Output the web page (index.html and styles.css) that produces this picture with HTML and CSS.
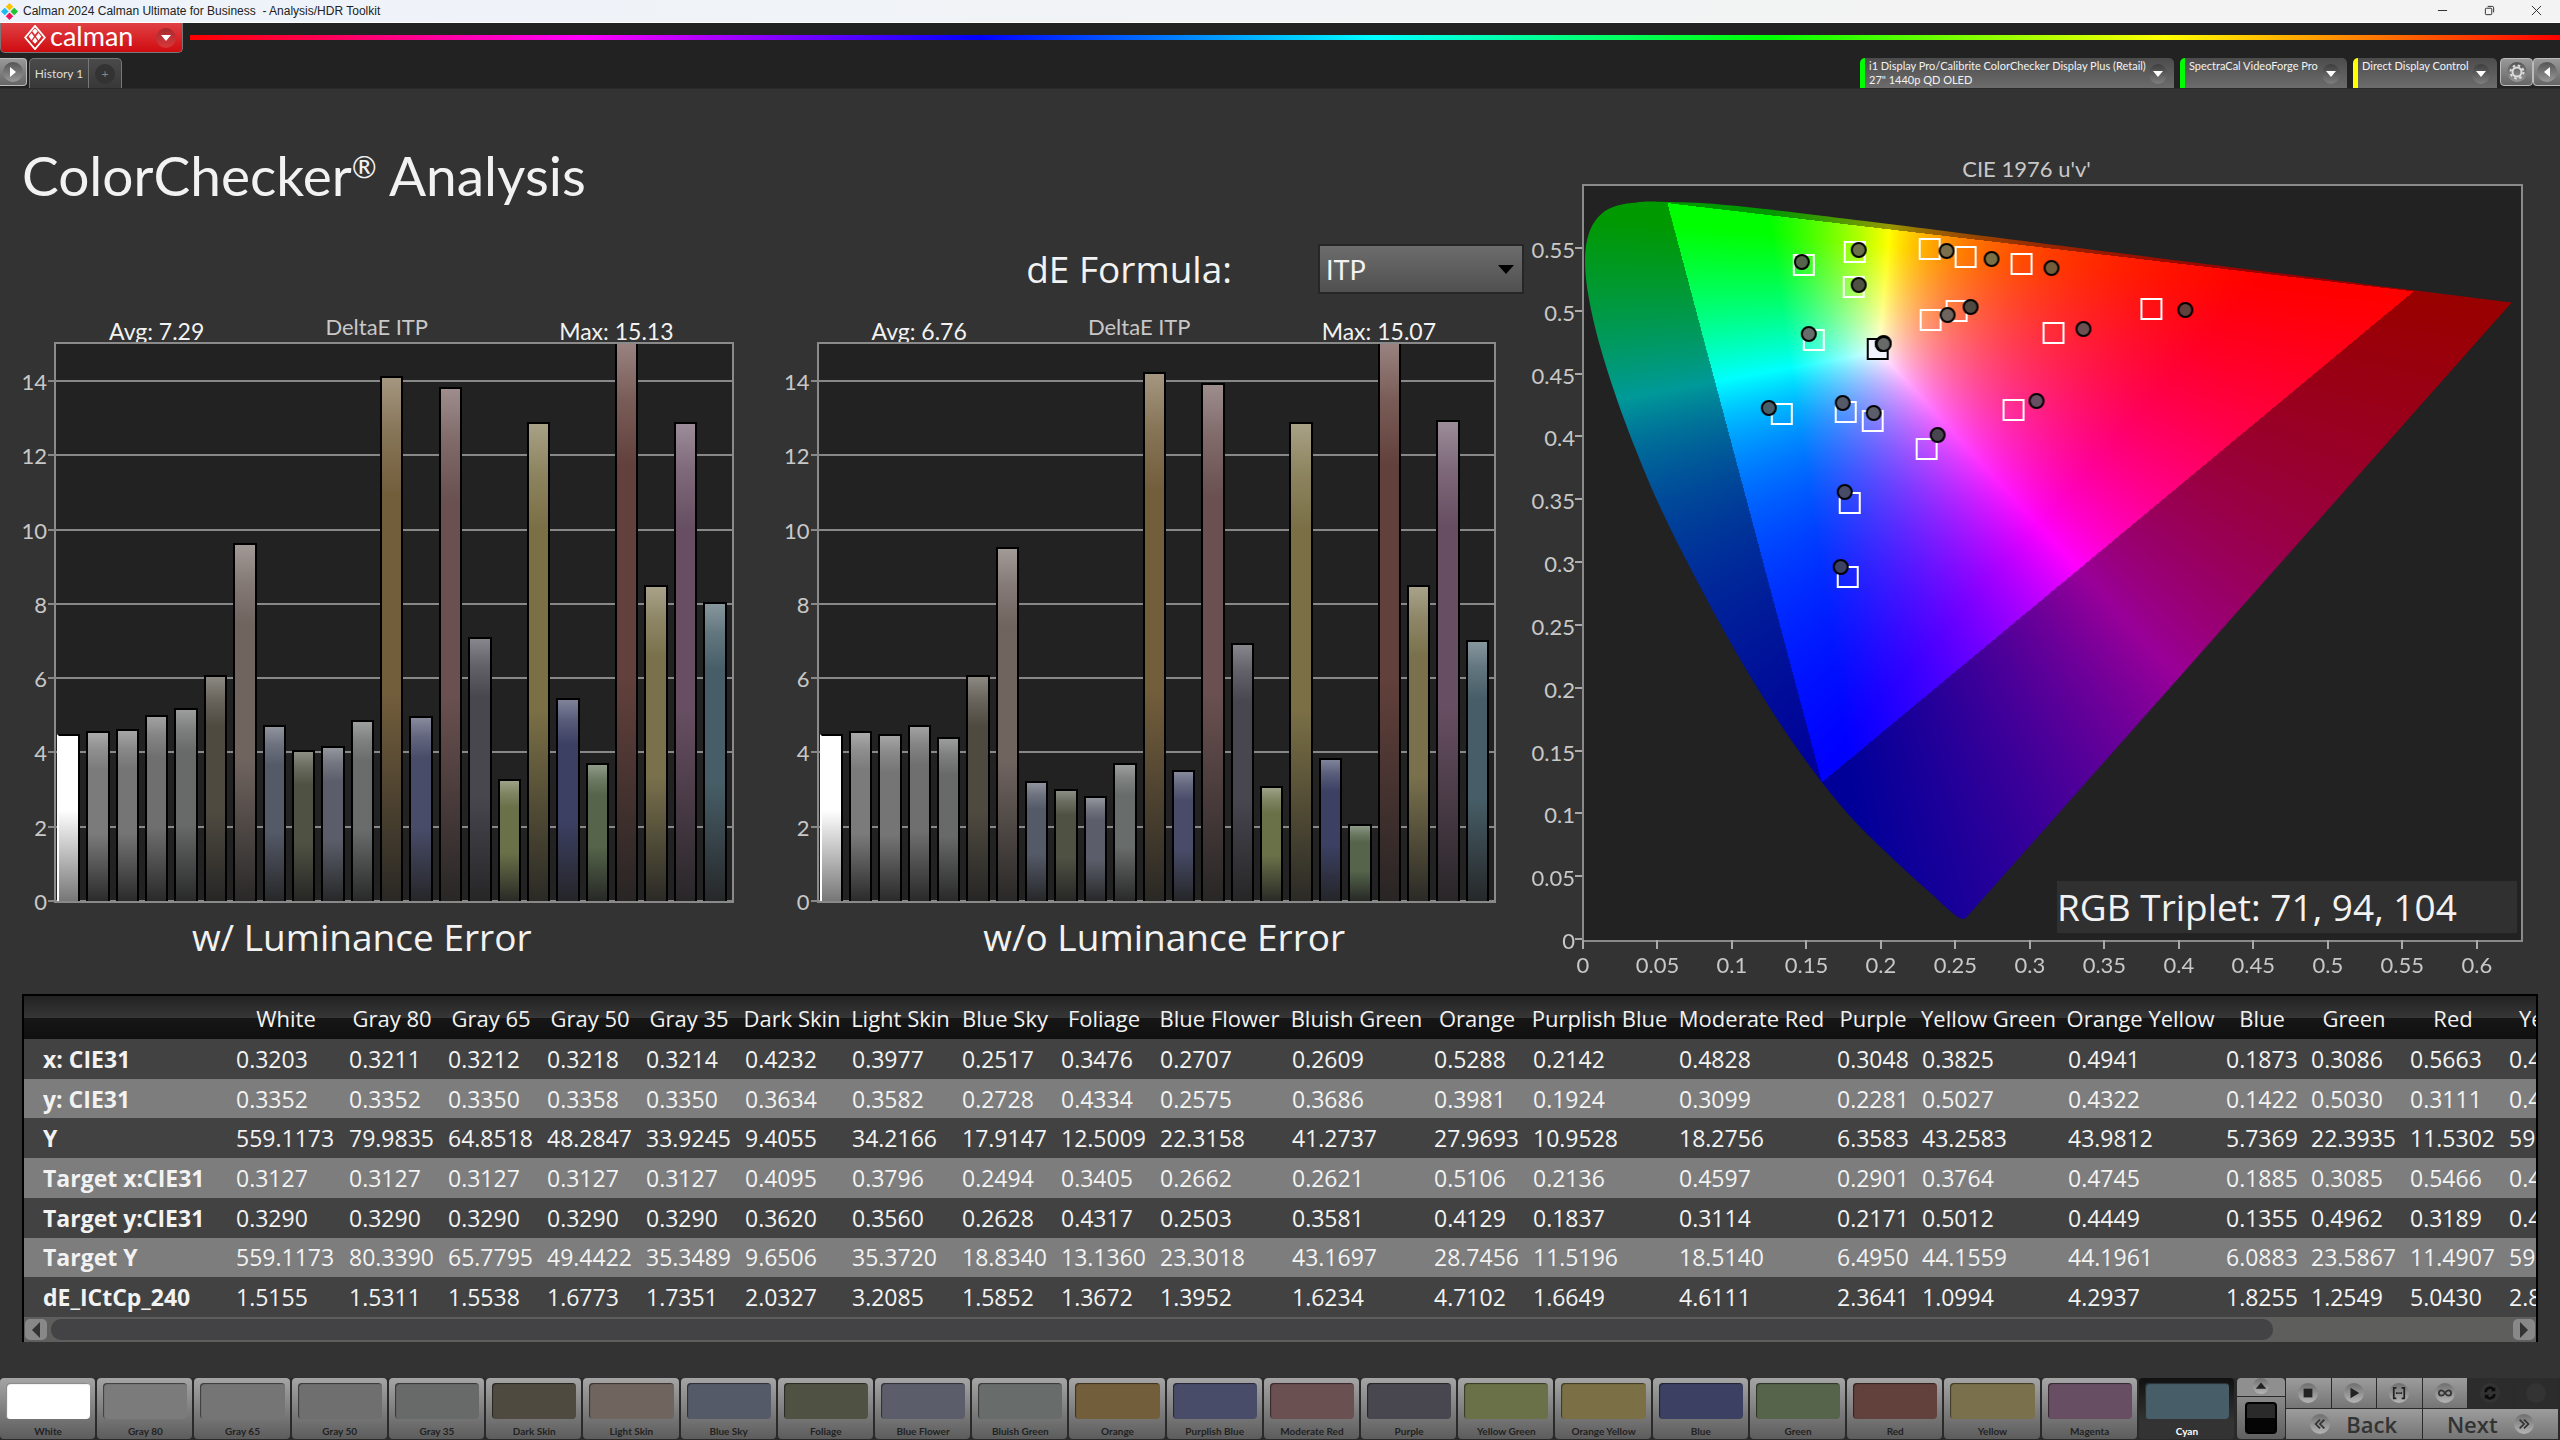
FILE: index.html
```html
<!DOCTYPE html>
<html lang="en">
<head>
<meta charset="UTF-8">
<meta name="viewport" content="width=device-width, initial-scale=1.0">
<title>Calman 2024 Calman Ultimate for Business - Analysis/HDR Toolkit</title>
<link rel="stylesheet" href="styles.css">
</head>
<body>
<div class="titlebar">
    <svg class="app-icon" viewBox="0 0 18 18">
        <path d="M9 0l4 4-4 4-4-4z" fill="#fdc300"/>
        <path d="M4 5l4 4-4 4-4-4z" fill="#22b8f0"/>
        <path d="M14 5l4 4-4 4-4-4z" fill="#22c32e"/>
        <path d="M9 10l4 4-4 4-4-4z" fill="#f0145a"/>
    </svg>
    <span>Calman 2024 Calman Ultimate for Business &nbsp;- Analysis/HDR Toolkit</span>
    <div class="window-buttons">
        <button aria-label="Minimize"><svg viewBox="0 0 12 12"><path d="M1 6h10"/></svg></button>
        <button aria-label="Restore"><svg viewBox="0 0 12 12"><rect x="1.5" y="3.5" width="7" height="7" rx="1"/><path d="M4 1.5h5q1.5 0 1.5 1.5v5"/></svg></button>
        <button aria-label="Close"><svg viewBox="0 0 12 12"><path d="M1 1l10 10M11 1L1 11"/></svg></button>
    </div>
</div>

<header>
    <div class="brandbar">
        <button class="logo">
            <svg class="logo-mark" viewBox="0 0 24 28">
                <path d="M12 1L23 14 12 27 1 14z" fill="none" stroke="#fff" stroke-width="2"/>
                <g fill="#fff">
                    <path d="M12 4l3 3-3 4-3-4z"/><path d="M8 9l3 4-3 4-3-4z"/><path d="M16 9l3 4-3 4-3-4z"/>
                    <path d="M12 14l3 4-3 3-3-3z"/>
                </g>
            </svg>
            <span class="logo-text">calman</span>
            <span class="round"><i class="arrow down"></i></span>
        </button>
        <div class="rainbow"></div>
    </div>
    <div class="tabbar">
        <button class="side-btn left" aria-label="Expand"><span class="round"><i class="arrow right"></i></span></button>
        <div class="tabs">
            <button class="tab">History 1</button>
            <button class="tab add"><span class="round dark">+</span></button>
        </div>
        <div class="devices">
            <button class="device meter">
                <span>i1 Display Pro/Calibrite ColorChecker Display Plus (Retail)<br>27" 1440p QD OLED</span>
                <span class="round"><i class="arrow down"></i></span>
            </button>
            <button class="device source">
                <span>SpectraCal VideoForge Pro</span>
                <span class="round"><i class="arrow down"></i></span>
            </button>
            <button class="device display">
                <span>Direct Display Control</span>
                <span class="round"><i class="arrow down"></i></span>
            </button>
            <button class="side-btn gear" aria-label="Settings"><span class="round">
                <svg viewBox="0 0 16 16"><circle cx="8" cy="8" r="4.5" fill="none" stroke="#ddd" stroke-width="2"/><circle cx="8" cy="8" r="6.5" fill="none" stroke="#ddd" stroke-width="2" stroke-dasharray="2.5 2.6"/></svg>
            </span></button>
            <button class="side-btn right" aria-label="Collapse"><span class="round"><i class="arrow left"></i></span></button>
        </div>
    </div>
</header>

<main>
    <div class="dash">
        <section class="left">
            <h1>ColorChecker<span class="reg">®</span> Analysis</h1>
            <div class="formula">
                <label for="formula">dE Formula:</label>
                <div class="select-wrap">
                    <select id="formula">
                        <option>ITP</option>
                        <option>2000</option>
                        <option>1994</option>
                    </select>
                </div>
            </div>
            <div class="charts">
                <div class="chart">
                    <div class="chart-head">
                        <span>Avg: 7.29</span><span class="chart-title">DeltaE ITP</span><span>Max: 15.13</span>
                    </div>
                    <div class="plot" id="chartLum"></div>
                    <div class="caption">w/ Luminance Error</div>
                </div>
                <div class="chart second">
                    <div class="chart-head">
                        <span>Avg: 6.76</span><span class="chart-title">DeltaE ITP</span><span>Max: 15.07</span>
                    </div>
                    <div class="plot" id="chartNoLum"></div>
                    <div class="caption">w/o Luminance Error</div>
                </div>
            </div>
        </section>
        <section class="cie">
            <div class="cie-title">CIE 1976 u'v'</div>
            <div class="cie-plot" id="ciePlot">
                <canvas id="cieCanvas" width="938" height="754"></canvas>
                <div class="triplet">RGB Triplet: 71, 94, 104</div>
            </div>
        </section>
    </div>

    <div class="grid-box">
        <div class="grid-view">
            <table id="dataTable"></table>
        </div>
        <div class="scrollbar">
            <button aria-label="Scroll left"><i class="arrow left"></i></button>
            <div class="track"><div class="thumb"></div></div>
            <button aria-label="Scroll right"><i class="arrow right"></i></button>
        </div>
    </div>
</main>

<footer>
    <div class="swatches" id="swatches"></div>
    <div class="level">
        <button class="level-up" aria-label="Up"><span class="knob"><svg viewBox="0 0 16 16"><path d="M8 4l6 7H2z" fill="#222"/></svg></span></button>
        <div class="level-box"><div class="level-color"></div></div>
    </div>
    <div class="controls">
        <div class="transport">
            <button aria-label="Stop"><span class="knob"><svg viewBox="0 0 16 16"><path d="M3 3h10v10H3z" fill="#222"/></svg></span></button>
            <button aria-label="Play"><span class="knob"><svg viewBox="0 0 16 16"><path d="M4 2l10 6-10 6z" fill="#222"/></svg></span></button>
            <button aria-label="Read series"><span class="knob"><svg viewBox="0 0 16 16"><path d="M5 2H2v12h3M11 2h3v12h-3M4.5 8h2M7.2 8h1.6M9.500 8h2" fill="none" stroke="#222" stroke-width="2"/></svg></span></button>
            <button aria-label="Read continuous"><span class="knob"><svg viewBox="0 0 16 16"><path d="M8 8C6 5 5 5 4 5a3 3 0 0 0 0 6c1 0 2 0 4-3s3-3 4-3a3 3 0 0 1 0 6c-1 0-2 0-4-3" fill="none" stroke="#333" stroke-width="2"/></svg></span></button>
            <button class="off" aria-label="Refresh"><span class="knob"><svg viewBox="0 0 16 16"><path d="M3 7a5 5 0 0 1 9-3M13 9a5 5 0 0 1-9 3" fill="none" stroke="#0c0c0c" stroke-width="3"/><path d="M14 1v5H9zM2 15v-5h5z" fill="#0c0c0c"/></svg></span></button>
            <button class="off" aria-label="Record"><span class="knob"></span></button>
        </div>
        <div class="nav">
            <button><span class="knob"><svg viewBox="0 0 16 16"><path d="M8 3L3 8l5 5M13 3L8 8l5 5" fill="none" stroke="#333" stroke-width="2"/></svg></span>Back</button>
            <button>Next<span class="knob"><svg viewBox="0 0 16 16"><path d="M3 3l5 5-5 5M8 3l5 5-5 5" fill="none" stroke="#333" stroke-width="2"/></svg></span></button>
        </div>
    </div>
</footer>

<script src="script.js"></script>
</body>
</html>
```

FILE: styles.css
```css
* {
    box-sizing: border-box;
}
body {
    margin: 0;
    min-height: 100vh;
    display: flex;
    flex-direction: column;
    font-family: Lato, 'Liberation Sans', sans-serif;
    background-color: #333;
    color: #f2f2f2;
    overflow-x: hidden;
}
button {
    font-family: inherit;
    color: inherit;
    border: 0;
    padding: 0;
    margin: 0;
    background: none;
    cursor: pointer;
}

/* window title */
.titlebar {
    display: flex;
    align-items: center;
    height: 23px;
    padding-left: 1px;
    background: linear-gradient(to right, #eef3fb, #f3f3f3 75%);
    border-bottom: 1px solid #fff;
    color: #222;
    font-family: 'Liberation Sans', sans-serif;
    font-size: 12px;
}
.app-icon {
    width: 17px;
    height: 17px;
    margin-right: 5px;
}
.window-buttons {
    display: flex;
    margin-left: auto;
}
.window-buttons button {
    width: 47px;
    height: 22px;
}
.window-buttons svg {
    width: 11px;
    height: 11px;
    fill: none;
    stroke: #222;
}

/* header */
header {
    background-color: #222;
    border-bottom: 1px solid #2a2a2a;
}
.brandbar {
    display: flex;
    gap: 7px;
    height: 35px;
}
.logo {
    display: flex;
    align-items: center;
    width: 183px;
    height: 30px;
    padding-left: 22px;
    background: linear-gradient(#df4145, #d8262a 50%, #cf0c10);
    border: 1px solid #777;
    border-top: 0;
    border-radius: 0 0 5px 5px;
    color: #fff;
}
.logo-mark {
    width: 24px;
    height: 25px;
}
.logo-text {
    margin: -5px auto 0 3px;
    font-size: 27px;
    line-height: 27px;
}
.round {
    display: flex;
    align-items: center;
    justify-content: center;
    flex: none;
    width: 20px;
    height: 20px;
    border-radius: 50%;
    background: linear-gradient(rgba(0, 0, 0, 0.25), rgba(255, 255, 255, 0.15));
}
.logo .round {
    margin-right: 6px;
}
.arrow {
    border: 5px solid transparent;
}
.arrow.down {
    border-top: 6px solid #fff;
    border-bottom: 0;
}
.arrow.right {
    border-left: 6px solid #fff;
    border-right: 0;
}
.arrow.left {
    border-right: 6px solid #fff;
    border-left: 0;
}
.rainbow {
    flex: 1;
    height: 5px;
    margin-top: 12px;
    background: linear-gradient(to right, #f00, #f0f, #00f, #0ff, #0f0, #ff0, #f00);
}
.tabbar {
    display: flex;
    height: 30px;
}
.side-btn {
    display: flex;
    align-items: center;
    justify-content: center;
    width: 33px;
    height: 28px;
    border: 1px solid #bbb;
    border-radius: 4px;
    background: linear-gradient(#999, #666);
}
.side-btn .round {
    background: linear-gradient(#555, #999);
}
.side-btn svg {
    width: 16px;
    height: 16px;
}
.side-btn.left {
    width: 27px;
    border-left: 0;
    border-radius: 0 4px 4px 0;
}
.side-btn.right {
    width: 27px;
    border-right: 0;
    border-radius: 4px 0 0 4px;
}
.tabs {
    display: flex;
    margin-left: 2px;
    border: 1px solid #777;
    border-bottom: 0;
    border-radius: 5px 5px 0 0;
    background: linear-gradient(#4a4a4a, #383838);
}
.tab {
    width: 58px;
    font-size: 12px;
    color: #ddd;
}
.tab.add {
    display: flex;
    align-items: center;
    justify-content: center;
    width: 33px;
    border-left: 1px solid #777;
    color: #888;
}
.round.dark {
    background: #333;
}
.devices {
    display: flex;
    gap: 6px;
    margin-left: auto;
}
.device {
    display: flex;
    justify-content: space-between;
    align-items: flex-start;
    padding: 1px 7px 0 4px;
    border-left: 5px solid #0f0;
    border-radius: 5px 5px 0 0;
    background: linear-gradient(#4c4c4c, #6c6c6c);
    font-size: 11px;
    line-height: 14px;
    text-align: left;
    white-space: nowrap;
}
.device .round {
    width: 18px;
    margin-top: 5px;
}
.meter {
    width: 314px;
}
.source {
    width: 167px;
}
.display {
    width: 144px;
    border-color: #ff0;
}
.gear {
    margin-left: -3px;
    margin-right: -6px;
}

/* dashboard */
main {
    padding: 54px 22px 0 16px;
}
.dash {
    display: grid;
    grid-template-columns: minmax(0, 1508fr) minmax(0, 997fr);
    gap: 2px;
    padding-right: 15px;
}
h1 {
    margin: 0;
    padding-left: 6px;
    font-size: 55px;
    line-height: 64px;
    font-weight: normal;
}
.reg {
    font-size: 30px;
    line-height: 30px;
    vertical-align: 18px;
}
.formula {
    display: flex;
    align-items: center;
    justify-content: flex-end;
    gap: 86px;
    margin-top: 37px;
    font-family: 'Open Sans', sans-serif;
    font-size: 37px;
    line-height: 50px;
}
.select-wrap {
    position: relative;
    width: 206px;
    height: 50px;
}
.select-wrap::after {
    content: "";
    position: absolute;
    right: 10px;
    top: 21px;
    border: 8px solid transparent;
    border-top: 9px solid #000;
    border-bottom: 0;
    pointer-events: none;
}
select {
    display: block;
    appearance: none;
    width: 100%;
    height: 50px;
    padding: 0 6px;
    border: 2px solid #262626;
    background: linear-gradient(#6c6c6c, #505050);
    color: #f2f2f2;
    font-family: Lato, sans-serif;
    font-size: 27px;
}
.charts {
    display: grid;
    grid-template-columns: 1fr 1fr;
    gap: 45px;
    padding-right: 28px;
}
.chart {
    padding-left: 38px;
}
.chart-head {
    display: flex;
    justify-content: space-between;
    align-items: flex-end;
    height: 48px;
    padding: 0 60px 0 55px;
    font-size: 23px;
    line-height: 22px;
}
.chart-title {
    padding: 0 10px 4px 0;
    font-size: 22px;
    color: #c8c8c8;
}
.plot {
    position: relative;
    display: grid;
    grid-template-columns: repeat(23, 1fr);
    height: 561px;
    border: 2px solid #8a8a8a;
    background-color: #222;
}
.gridline {
    position: absolute;
    left: -8px;
    right: 0;
    height: 2px;
    margin-bottom: -1px;
    background-color: #888;
}
.y-label {
    position: absolute;
    right: 100%;
    margin: 0 9px -14px 0;
    font-size: 22px;
    line-height: 26px;
    color: #c8c8c8;
}
.bar {
    position: relative;
    align-self: end;
    margin: 0 5px 0 1px;
    border: 2px solid #000;
    border-bottom: 0;
    background-image: linear-gradient(rgba(255, 255, 255, 0.35), rgba(255, 255, 255, 0.15) 10%, transparent 22%, transparent 60%, rgba(34, 34, 34, 0.9));
}
.bar.white {
    border-left-color: #fff;
    background-image: linear-gradient(transparent 45%, #777);
}
.caption {
    margin-top: 12px;
    font-family: 'Open Sans', sans-serif;
    font-size: 37px;
    line-height: 44px;
    text-align: center;
}
.chart .caption {
    margin-right: 64px;
}
.chart.second .caption {
    margin-right: 0;
    margin-left: 16px;
}

/* chromaticity */
.cie {
    padding-left: 56px;
}
.cie-title {
    padding: 12px 52px 1px 0;
    font-size: 22px;
    line-height: 28px;
    text-align: center;
    color: #c8c8c8;
}
.cie-plot {
    position: relative;
    height: 758px;
    border: 2px solid #8a8a8a;
    background-color: #222;
}
.cie-plot canvas {
    display: block;
    width: 100%;
    height: 100%;
}
.y-tick {
    position: absolute;
    left: -9px;
    width: 7px;
    height: 2px;
    background-color: #aaa;
}
.x-tick {
    position: absolute;
    top: 100%;
    width: 2px;
    height: 9px;
    margin-left: -2px;
    background-color: #aaa;
}
.x-label {
    position: absolute;
    top: 100%;
    width: 80px;
    margin: 12px 0 0 -41px;
    font-size: 22px;
    line-height: 26px;
    text-align: center;
    color: #c8c8c8;
}
.triplet {
    position: absolute;
    right: 4px;
    bottom: 7px;
    width: 460px;
    background-color: #303030;
    font-family: 'Open Sans', sans-serif;
    font-size: 37px;
    line-height: 52px;
    white-space: nowrap;
}

/* readings table */
.grid-box {
    margin: 35px 0 0 6px;
    border: 2px solid #000;
    border-bottom: 0;
}
.grid-view {
    overflow: hidden;
}
table {
    table-layout: fixed;
    border-collapse: collapse;
    height: 321px;
    font-family: 'Open Sans', sans-serif;
    font-size: 23px;
    line-height: 30px;
    white-space: nowrap;
}
th, td {
    padding: 0 0 0 5px;
    text-align: left;
}
thead tr {
    height: 43px;
    background: linear-gradient(#222, #363636 50%, #161616 50%, #101010);
}
thead th {
    padding: 0 3px 0 0;
    font-size: 22px;
    font-weight: normal;
    text-align: center;
}
tbody th {
    padding-left: 19px;
    font-size: 23px;
}
tbody tr {
    background-color: #424242;
}
tbody tr:nth-child(even) {
    background-color: #7d7d7d;
}
.scrollbar {
    display: flex;
    gap: 4px;
    height: 25px;
    padding: 2px 1px;
    background-color: #5e5e5c;
}
.scrollbar button {
    display: flex;
    align-items: center;
    justify-content: center;
    width: 22px;
    border-radius: 5px;
    background-color: #888;
}
.scrollbar .arrow {
    border-width: 8px;
}
.scrollbar .arrow.left {
    border-right-color: #333;
    border-left: 0;
}
.scrollbar .arrow.right {
    border-left-color: #333;
    border-right: 0;
}
.track {
    flex: 1;
}
.thumb {
    width: 90.4%;
    height: 100%;
    border-radius: 10px;
    background-color: #434345;
}

/* bottom bar */
footer {
    display: flex;
    gap: 1px;
    height: 62px;
    margin-top: auto;
    padding: 0 2px 1px 0;
    background-color: #2a2a2a;
}
.swatches {
    flex: 1;
    display: grid;
    grid-template-columns: repeat(23, minmax(0, 1fr));
}
.swatch {
    display: flex;
    flex-direction: column;
    justify-content: space-between;
    margin-right: 2px;
    padding: 5px 5px 2px 6px;
    border-radius: 4px;
    background: linear-gradient(#a5a5a5, #5c5c5c);
    color: #222;
    font-size: 10px;
    line-height: 12px;
    font-weight: bold;
    white-space: nowrap;
}
.swatch i {
    height: 36px;
    border-radius: 4px;
    box-shadow: inset 1px 1px 1px rgba(0, 0, 0, 0.5);
}
.swatch.active {
    background: linear-gradient(#111, #333 70%);
    color: #fff;
}
.level {
    width: 48px;
    display: flex;
    flex-direction: column;
    gap: 1px;
}
.level-up {
    display: flex;
    justify-content: center;
    height: 18px;
    border-radius: 4px 4px 0 0;
    background: #8f8f8f;
}
.level-box {
    flex: 1;
    display: flex;
    align-items: center;
    justify-content: center;
    border-radius: 0 0 4px 4px;
    background: linear-gradient(#888, #606060);
}
.level-color {
    width: 32px;
    height: 32px;
    border: 2px solid #000;
    border-radius: 4px;
    background: linear-gradient(#2a2a2a 50%, #050505 50%);
}
.controls {
    width: 272px;
    display: grid;
    grid-template-rows: 30px 30px;
    gap: 1px;
}
.transport, .nav {
    display: flex;
    gap: 1px;
}
.transport button, .nav button {
    flex: 1;
    display: flex;
    align-items: center;
    justify-content: center;
    background: linear-gradient(#9c9c9c, #757575);
}
.nav button {
    gap: 16px;
    color: #333;
    font-family: 'Open Sans', sans-serif;
    font-size: 22px;
    line-height: 28px;
    font-weight: 600;
}
.transport .off {
    background: #2c2c2c;
}
.knob {
    display: flex;
    align-items: center;
    justify-content: center;
    width: 20px;
    height: 20px;
    border-radius: 50%;
    background: linear-gradient(#6e6e6e, #b5b5b5);
}
.level-up .knob {
    width: 16px;
    height: 16px;
}
.off .knob {
    background: #333;
}
.knob svg {
    width: 14px;
    height: 14px;
}
```

FILE: script.js
```javascript
// name, color, dE with luminance, dE without luminance
const patches = [
    ['White', '#ffffff', 4.51, 4.51],
    ['Gray 80', '#7b7b7b', 4.57, 4.57],
    ['Gray 65', '#757575', 4.64, 4.51],
    ['Gray 50', '#6f6f6f', 5.02, 4.75],
    ['Gray 35', '#676a69', 5.21, 4.41],
    ['Dark Skin', '#4f4a40', 6.1, 6.1],
    ['Light Skin', '#70645f', 9.64, 9.53],
    ['Blue Sky', '#555a69', 4.75, 3.23],
    ['Foliage', '#4f5243', 4.07, 3.01],
    ['Blue Flower', '#5b5e6a', 4.18, 2.83],
    ['Bluish Green', '#686c6b', 4.87, 3.73],
    ['Orange', '#735e3c', 14.14, 14.25],
    ['Purplish Blue', '#484c68', 4.97, 3.52],
    ['Moderate Red', '#6a5050', 13.85, 13.96],
    ['Purple', '#48464f', 7.1, 6.94],
    ['Yellow Green', '#6a7048', 3.29, 3.11],
    ['Orange Yellow', '#7a6f45', 12.9, 12.9],
    ['Blue', '#3c4063', 5.48, 3.85],
    ['Green', '#55644a', 3.73, 2.08],
    ['Red', '#62403b', 15.13, 15.07],
    ['Yellow', '#7a714c', 8.5, 8.5],
    ['Magenta', '#674e62', 12.9, 12.96],
    ['Cyan', '#475e68', 8.05, 7.04]
];

const rows = {
    'x: CIE31': '0.3203 0.3211 0.3212 0.3218 0.3214 0.4232 0.3977 0.2517 0.3476 0.2707 0.2609 0.5288 0.2142 0.4828 0.3048 0.3825 0.4941 0.1873 0.3086 0.5663 0.4658',
    'y: CIE31': '0.3352 0.3352 0.3350 0.3358 0.3350 0.3634 0.3582 0.2728 0.4334 0.2575 0.3686 0.3981 0.1924 0.3099 0.2281 0.5027 0.4322 0.1422 0.5030 0.3111 0.4632',
    'Y': '559.1173 79.9835 64.8518 48.2847 33.9245 9.4055 34.2166 17.9147 12.5009 22.3158 41.2737 27.9693 10.9528 18.2756 6.3583 43.2583 43.9812 5.7369 22.3935 11.5302 59.1024',
    'Target x:CIE31': '0.3127 0.3127 0.3127 0.3127 0.3127 0.4095 0.3796 0.2494 0.3405 0.2662 0.2621 0.5106 0.2136 0.4597 0.2901 0.3764 0.4745 0.1885 0.3085 0.5466 0.4532',
    'Target y:CIE31': '0.3290 0.3290 0.3290 0.3290 0.3290 0.3620 0.3560 0.2628 0.4317 0.2503 0.3581 0.4129 0.1837 0.3114 0.2171 0.5012 0.4449 0.1355 0.4962 0.3189 0.4739',
    'Target Y': '559.1173 80.3390 65.7795 49.4422 35.3489 9.6506 35.3720 18.8340 13.1360 23.3018 43.1697 28.7456 11.5196 18.5140 6.4950 44.1559 44.1961 6.0883 23.5867 11.4907 59.8342',
    'dE_ICtCp_240': '1.5155 1.5311 1.5538 1.6773 1.7351 2.0327 3.2085 1.5852 1.3672 1.3952 1.6234 4.7102 1.6649 4.6111 2.3641 1.0994 4.2937 1.8255 1.2549 5.0430 2.8611'
};
const columnWidths = [207, 113, 99, 99, 99, 99, 107, 110, 99, 99, 132, 142, 99, 146, 158, 85, 146, 158, 85, 99, 99, 99];

function add(parent, tag, className, text) {
    const el = document.createElement(tag);
    if (className) el.className = className;
    if (text !== undefined) el.textContent = text;
    parent.appendChild(el);
    return el;
}

function drawBars(id, valueIndex) {
    const plot = document.getElementById(id);
    const max = 15;
    for (let v = 0; v <= 14; v += 2) {
        add(plot, 'div', 'gridline').style.bottom = v / max * 100 + '%';
        add(plot, 'span', 'y-label', v).style.bottom = v / max * 100 + '%';
    }
    patches.forEach(p => {
        const bar = add(plot, 'div', p[0] === 'White' ? 'bar white' : 'bar');
        bar.style.height = Math.min(p[valueIndex] / max * 100, 100) + '%';
        bar.style.backgroundColor = p[1];
        if (p[valueIndex] > max) bar.style.borderTop = 0;
    });
}

function drawTable() {
    const table = document.getElementById('dataTable');
    table.style.width = columnWidths.reduce((a, b) => a + b) + 'px';
    const group = add(table, 'colgroup');
    columnWidths.forEach(w => add(group, 'col').style.width = w + 'px');
    const head = add(add(table, 'thead'), 'tr');
    add(head, 'td');
    patches.slice(0, 21).forEach(p => add(head, 'th', '', p[0]).scope = 'col');
    const body = add(table, 'tbody');
    for (const label in rows) {
        const tr = add(body, 'tr');
        add(tr, 'th', '', label).scope = 'row';
        rows[label].split(' ').forEach(v => add(tr, 'td', '', v));
    }
}

function drawSwatches() {
    const box = document.getElementById('swatches');
    patches.forEach(p => {
        const btn = add(box, 'button', p[0] === 'Cyan' ? 'swatch active' : 'swatch');
        add(btn, 'i').style.backgroundColor = p[1];
        add(btn, 'span', '', p[0]);
    });
}

// CIE 1931 spectral locus, 380 to 700 nm
const locus = [
    [.1741, .0050], [.1733, .0048], [.1714, .0051], [.1689, .0069], [.1644, .0109], [.1566, .0177],
    [.1440, .0297], [.1355, .0399], [.1241, .0578], [.1096, .0868], [.0913, .1327], [.0687, .2007],
    [.0454, .2950], [.0235, .4127], [.0082, .5384], [.0039, .6548], [.0139, .7502], [.0389, .8120],
    [.0743, .8338], [.1142, .8262], [.1547, .8059], [.2296, .7543], [.3016, .6923], [.3731, .6245],
    [.4441, .5547], [.5125, .4866], [.5752, .4242], [.6270, .3725], [.6658, .3340], [.6915, .3083],
    [.7190, .2809], [.7347, .2653]
];
const gamut = [[.5566, .5165], [.0556, .5868], [.1593, .1258]]; // BT.2020
const maxU = 0.629, maxV = 0.6;

function toUv(x, y) {
    const d = -2 * x + 12 * y + 3;
    return [4 * x / d, 9 * y / d];
}

function inGamut(u, v) {
    let inside = true;
    for (let i = 0; i < 3; i++) {
        const a = gamut[i], b = gamut[(i + 1) % 3];
        if ((b[0] - a[0]) * (v - a[1]) - (b[1] - a[1]) * (u - a[0]) < 0) inside = false;
    }
    return inside;
}

function drawCie() {
    const canvas = document.getElementById('cieCanvas');
    const ctx = canvas.getContext('2d');
    const w = canvas.width, h = canvas.height;
    const img = ctx.createImageData(w, h);
    for (let py = 0; py < h; py++) {
        for (let px = 0; px < w; px++) {
            const u = px / w * maxU, v = (h - py) / h * maxV;
            const d = 6 * u - 16 * v + 12;
            const x = 9 * u / d, y = 4 * v / d, z = 1 - x - y;
            const rgb = [
                3.2406 * x - 1.5372 * y - 0.4986 * z,
                -0.9689 * x + 1.8758 * y + 0.0415 * z,
                0.0557 * x - 0.2040 * y + 1.0570 * z
            ];
            const k = 255 / Math.max(...rgb) * (inGamut(u, v) ? 1 : 0.6);
            const i = (py * w + px) * 4;
            for (let c = 0; c < 3; c++) img.data[i + c] = Math.max(0, rgb[c] * k);
            img.data[i + 3] = 255;
        }
    }
    ctx.putImageData(img, 0, 0);

    // cut the colours to the locus, with a smooth curve through its points
    const edge = locus.map(p => {
        const [u, v] = toUv(p[0], p[1]);
        return [u / maxU * w - 1, h - v / maxV * h - 1];
    });
    ctx.globalCompositeOperation = 'destination-in';
    ctx.beginPath();
    ctx.moveTo(edge[0][0], edge[0][1]);
    for (let i = 0; i < edge.length - 1; i++) {
        const a = edge[Math.max(i - 1, 0)], b = edge[i], c = edge[i + 1], d = edge[Math.min(i + 2, edge.length - 1)];
        ctx.bezierCurveTo(
            b[0] + (c[0] - a[0]) / 6, b[1] + (c[1] - a[1]) / 6,
            c[0] - (d[0] - b[0]) / 6, c[1] - (d[1] - b[1]) / 6,
            c[0], c[1]
        );
    }
    ctx.fill();
    ctx.globalCompositeOperation = 'source-over';

    // targets are squares, measurements are dots
    const num = label => rows[label].split(' ').map(Number);
    const mx = num('x: CIE31').concat(.3921, .1873), my = num('y: CIE31').concat(.2443, .2810);
    const tx = num('Target x:CIE31').concat(.3713, .1959), ty = num('Target y:CIE31').concat(.2397, .2722);
    const point = (x, y) => {
        const [u, v] = toUv(x, y);
        return [Math.round(u / maxU * w) - 1, Math.round(h - v / maxV * h) - 2];
    };
    ctx.lineWidth = 2;
    patches.forEach((p, i) => {
        if (i > 0 && i < 5) return;
        const [x, y] = point(tx[i], ty[i]);
        ctx.strokeStyle = i === 0 ? '#000' : '#fff';
        if (i === 0) {
            ctx.fillStyle = '#f2f2fc';
            ctx.fillRect(x - 10, y - 10, 20, 20);
        }
        ctx.strokeRect(x - 10, y - 10, 20, 20);
    });
    ctx.strokeStyle = '#000';
    patches.forEach((p, i) => {
        if (i === 0) return;
        const [x, y] = point(mx[i], my[i]);
        ctx.fillStyle = p[1];
        ctx.beginPath();
        ctx.arc(x, y, 7, 0, Math.PI * 2);
        ctx.fill();
        ctx.stroke();
    });

    const plot = document.getElementById('ciePlot');
    for (let i = 0; i <= 12; i++) {
        const value = +(i * 0.05).toFixed(2);
        const left = value / maxU * 100 + '%';
        add(plot, 'i', 'x-tick').style.left = left;
        add(plot, 'span', 'x-label', value).style.left = left;
        if (i < 12) {
            const bottom = value / maxV * 100 + '%';
            add(plot, 'i', 'y-tick').style.bottom = bottom;
            add(plot, 'span', 'y-label', value).style.bottom = bottom;
        }
    }
}

drawBars('chartLum', 2);
drawBars('chartNoLum', 3);
drawTable();
drawSwatches();
drawCie();
```
